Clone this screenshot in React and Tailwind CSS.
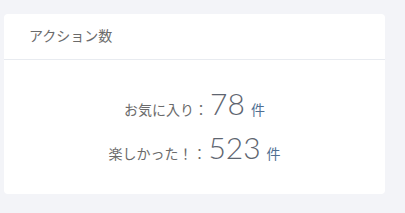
export default function App() {
  const font = { fontFamily: '"Lato", "Noto Sans CJK JP", sans-serif' };
  return (
    <div className="w-[405px] h-[213px] bg-[#f3f4f8] pt-[14px] pl-[4px]" style={font}>
      <div className="w-[381px] h-[180px] bg-white rounded-[4px] flex flex-col">
        <div className="h-[46px] border-b border-[#e8ebf0] pt-[12px] pl-[25px] text-[14px] leading-[20px] text-[#6b6b6b]">
          アクション数
        </div>
        <div className="flex-1 flex flex-col items-center pt-[21px] gap-[8px] text-[#6b6b6b]">
          <div className="flex items-baseline h-[36px]">
            <span className="text-[14px]">お気に入り：</span>
            <span className="text-[30px] font-light text-[#5e6570] ml-[2px]">78</span>
            <span className="text-[14px] text-[#4f6f92] ml-[6px]">件</span>
          </div>
          <div className="flex items-baseline h-[36px]">
            <span className="text-[14px]">楽しかった！：</span>
            <span className="text-[30px] font-light text-[#5e6570] ml-[2px]">523</span>
            <span className="text-[14px] text-[#4f6f92] ml-[6px]">件</span>
          </div>
        </div>
      </div>
    </div>
  );
}
